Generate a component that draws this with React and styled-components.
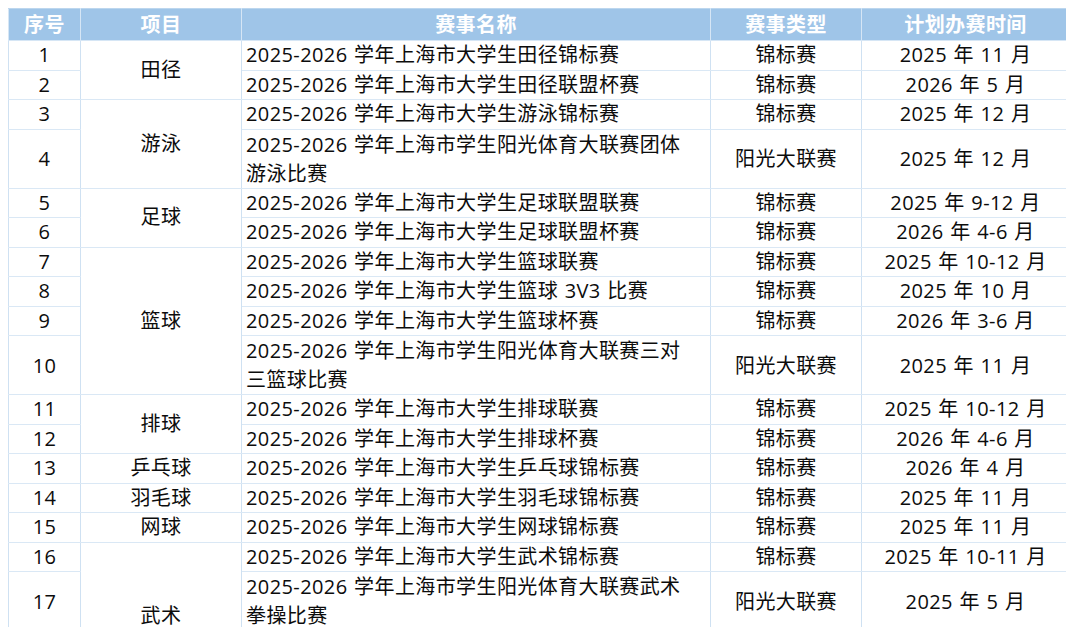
import React from "react";
import styled, { createGlobalStyle } from "styled-components";

const GlobalStyle = createGlobalStyle`
  html, body {
    margin: 0;
    padding: 0;
    overflow: hidden;
    background: #ffffff;
  }
`;

const P = "2025-2026 学年上海市";

const rows = [
  { no: 1, sport: "田径", span: 2, name: [P + "大学生田径锦标赛"], type: "锦标赛", time: "2025 年 11 月" },
  { no: 2, name: [P + "大学生田径联盟杯赛"], type: "锦标赛", time: "2026 年 5 月" },
  { no: 3, sport: "游泳", span: 2, name: [P + "大学生游泳锦标赛"], type: "锦标赛", time: "2025 年 12 月" },
  { no: 4, name: [P + "学生阳光体育大联赛团体", "游泳比赛"], type: "阳光大联赛", time: "2025 年 12 月" },
  { no: 5, sport: "足球", span: 2, name: [P + "大学生足球联盟联赛"], type: "锦标赛", time: "2025 年 9-12 月" },
  { no: 6, name: [P + "大学生足球联盟杯赛"], type: "锦标赛", time: "2026 年 4-6 月" },
  { no: 7, sport: "篮球", span: 4, name: [P + "大学生篮球联赛"], type: "锦标赛", time: "2025 年 10-12 月" },
  { no: 8, name: [P + "大学生篮球 3V3 比赛"], type: "锦标赛", time: "2025 年 10 月" },
  { no: 9, name: [P + "大学生篮球杯赛"], type: "锦标赛", time: "2026 年 3-6 月" },
  { no: 10, name: [P + "学生阳光体育大联赛三对", "三篮球比赛"], type: "阳光大联赛", time: "2025 年 11 月" },
  { no: 11, sport: "排球", span: 2, name: [P + "大学生排球联赛"], type: "锦标赛", time: "2025 年 10-12 月" },
  { no: 12, name: [P + "大学生排球杯赛"], type: "锦标赛", time: "2026 年 4-6 月" },
  { no: 13, sport: "乒乓球", span: 1, name: [P + "大学生乒乓球锦标赛"], type: "锦标赛", time: "2026 年 4 月" },
  { no: 14, sport: "羽毛球", span: 1, name: [P + "大学生羽毛球锦标赛"], type: "锦标赛", time: "2025 年 11 月" },
  { no: 15, sport: "网球", span: 1, name: [P + "大学生网球锦标赛"], type: "锦标赛", time: "2025 年 11 月" },
  { no: 16, sport: "武术", span: 3, name: [P + "大学生武术锦标赛"], type: "锦标赛", time: "2025 年 10-11 月" },
  { no: 17, name: [P + "学生阳光体育大联赛武术", "拳操比赛"], type: "阳光大联赛", time: "2025 年 5 月" },
  { no: 18, name: [P + "学生阳光体育大联赛武术", "套路比赛"], type: "阳光大联赛", time: "2025 年 6 月" },
];

const Page = styled.div`
  padding: 8px 0 0 8px;
  width: 1100px;
`;

const Table = styled.table`
  border-collapse: collapse;
  table-layout: fixed;
  width: 1061px;
  font-family: "Open Sans", "Noto Sans CJK SC", sans-serif;
  font-size: 20px;
  letter-spacing: 0.4px;
  word-spacing: 1px;
  color: #0c0c0c;
`;

const HeadCell = styled.th`
  background: #9fc5e8;
  color: #ffffff;
  font-weight: 700;
  height: 31px;
  line-height: 31px;
  padding: 0;
  text-align: center;
  border: 1px solid #d6e6f5;
  border-top-color: #bcd6ee;
`;

const Cell = styled.td`
  padding: ${(p) => (p.$left ? "0 0 0 4px" : "0")};
  text-align: ${(p) => (p.$left ? "left" : "center")};
  vertical-align: middle;
  line-height: ${(p) => (p.$tall ? "29px" : "28.5px")};
  height: ${(p) => (p.$tall ? "58px" : "28.5px")};
  border: 1px solid #dae8f5;
  border-left-color: #cfe1f2;
  border-right-color: #cfe1f2;
  white-space: nowrap;
`;

const App = () => {
  return (
    <Page>
      <GlobalStyle />
      <Table>
        <colgroup>
          <col style={{ width: 72 }} />
          <col style={{ width: 161 }} />
          <col style={{ width: 469 }} />
          <col style={{ width: 151 }} />
          <col style={{ width: 208 }} />
        </colgroup>
        <thead>
          <tr>
            <HeadCell>序号</HeadCell>
            <HeadCell>项目</HeadCell>
            <HeadCell>赛事名称</HeadCell>
            <HeadCell>赛事类型</HeadCell>
            <HeadCell>计划办赛时间</HeadCell>
          </tr>
        </thead>
        <tbody>
          {rows.map((r) => {
            const tall = r.name.length > 1;
            return (
              <tr key={r.no}>
                <Cell $tall={tall}>{r.no}</Cell>
                {r.sport && <Cell rowSpan={r.span}>{r.sport}</Cell>}
                <Cell $left $tall={tall}>
                  {r.name.map((line, i) => (
                    <React.Fragment key={i}>
                      {i > 0 && <br />}
                      {line}
                    </React.Fragment>
                  ))}
                </Cell>
                <Cell $tall={tall}>{r.type}</Cell>
                <Cell $tall={tall}>{r.time}</Cell>
              </tr>
            );
          })}
        </tbody>
      </Table>
    </Page>
  );
};

export default App;
